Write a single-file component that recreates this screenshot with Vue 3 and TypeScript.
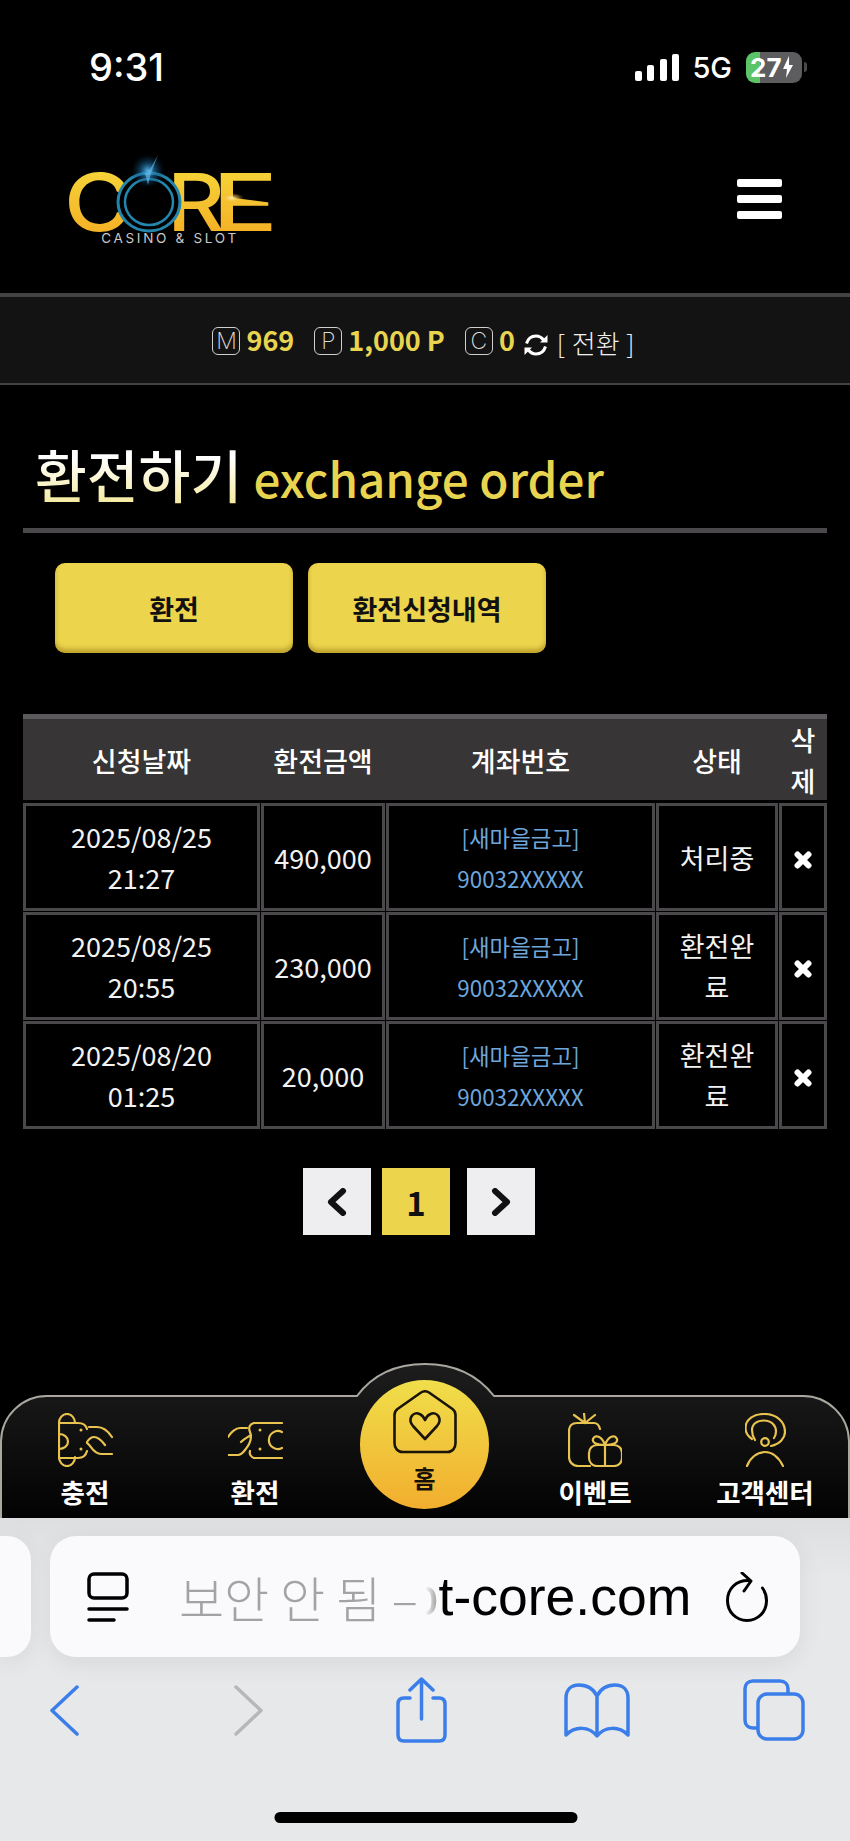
<script setup lang="ts">
const rows = [
  { date: '2025/08/25', time: '21:27', amount: '490,000', status: '처리중' },
  { date: '2025/08/25', time: '20:55', amount: '230,000', status: '환전완료' },
  { date: '2025/08/20', time: '01:25', amount: '20,000', status: '환전완료' }
]

const balances = [
  { key: 'M', value: '969' },
  { key: 'P', value: '1,000 P' },
  { key: 'C', value: '0' }
]

const heads = ['신청날짜', '환전금액', '계좌번호', '상태', '삭제']
</script>

<template>
  <div class="page">
    <div class="status">
      <span class="clock">9:31</span>
      <div class="status-right">
        <svg width="44" height="27" viewBox="0 0 44 27" fill="#fff">
          <rect x="0" y="17" width="7" height="10" rx="2" />
          <rect x="12" y="11" width="7" height="16" rx="2" />
          <rect x="25" y="5" width="7" height="22" rx="2" />
          <rect x="37" y="0" width="7" height="27" rx="2" />
        </svg>
        <span class="net">5G</span>
        <div class="battery"><span>27</span>
          <svg width="10" height="22" viewBox="0 0 10 22" fill="#fff"><path d="M6 0 0 13h4l-1 9 7-13H6z" /></svg>
        </div>
        <i class="nub"></i>
      </div>
    </div>

    <header class="header">
      <svg class="logo" width="216" height="96" viewBox="0 0 216 96">
        <defs>
          <linearGradient id="gold" x1="0" y1="0" x2="0" y2="1">
            <stop offset="0" stop-color="#f6dc3e" />
            <stop offset="1" stop-color="#f4a820" />
          </linearGradient>
          <radialGradient id="glow">
            <stop offset="0" stop-color="#57b8ee" />
            <stop offset="0.45" stop-color="#1c6fa6" stop-opacity="0.55" />
            <stop offset="1" stop-color="#0a2a44" stop-opacity="0" />
          </radialGradient>
          <radialGradient id="flare">
            <stop offset="0" stop-color="#fff3b0" />
            <stop offset="1" stop-color="#f4a820" stop-opacity="0" />
          </radialGradient>
        </defs>
        <text class="logo-letter" x="4" y="80" textLength="68" lengthAdjust="spacingAndGlyphs" fill="url(#gold)">C</text>
        <text class="logo-letter" x="107" y="80" textLength="58" lengthAdjust="spacingAndGlyphs" fill="url(#gold)">R</text>
        <text class="logo-letter" x="152" y="80" textLength="66" lengthAdjust="spacingAndGlyphs" fill="url(#gold)">E</text>
        <polygon points="174,47 213,42 213,52" fill="#000" />
        <ellipse cx="172" cy="47" rx="12" ry="5" fill="url(#flare)" />
        <ellipse cx="89" cy="51" rx="31" ry="29" fill="#000" stroke="#2386ac" stroke-width="3" />
        <ellipse cx="89" cy="51" rx="24" ry="23" fill="none" stroke="#2386ac" stroke-width="2.500" />
        <circle cx="88" cy="20" r="17" fill="url(#glow)" />
        <path d="M88 22 98 4 91 22 88 34 85 22z" fill="#6fc3f2" opacity="0.6" />
        <text class="logo-tag" x="110" y="92" text-anchor="middle">CASINO &amp; SLOT</text>
      </svg>
      <div class="burger"><i></i><i></i><i></i></div>
    </header>

    <div class="balance">
      <template v-for="b in balances" :key="b.key">
        <span class="coin">{{ b.key }}</span>
        <b class="amount">{{ b.value }}</b>
      </template>
      <svg class="sync" width="24" height="22" viewBox="0 0 24 22" fill="none" stroke="#fff" stroke-width="3">
        <path d="M2.500 9.500C4 4.500 8 2 12 2c3.300 0 5.700 1.500 7.500 4" />
        <path d="M21.500 12.500C20 17.500 16 20 12 20c-3.300 0-5.700-1.500-7.500-4" />
        <path d="M23.500 1v7.500H16z" fill="#fff" stroke="none" />
        <path d="M.5 21v-7.500H8z" fill="#fff" stroke="none" />
      </svg>
      <span class="swap">[ 전환 ]</span>
    </div>

    <main class="content">
      <h1 class="title"><span class="title-ko">환전하기</span> <span class="title-en">exchange order</span></h1>

      <div class="tabs">
        <button class="tab">환전</button>
        <button class="tab">환전신청내역</button>
      </div>

      <div class="table">
        <div class="thead">
          <div v-for="h in heads" :key="h" class="th">{{ h }}</div>
        </div>
        <div v-for="(r, i) in rows" :key="i" class="tr">
          <div class="td">{{ r.date }}<br />{{ r.time }}</div>
          <div class="td">{{ r.amount }}</div>
          <div class="td bank">[새마을금고]<br />90032XXXXX</div>
          <div class="td state">{{ r.status }}</div>
          <div class="td">
            <svg class="del" width="18" height="18" viewBox="0 0 18 18" stroke="#fff" stroke-width="6" stroke-linecap="round">
              <path d="M3.500 3.500l11 11M14.500 3.500l-11 11" />
            </svg>
          </div>
        </div>
      </div>

      <div class="pager">
        <button class="pg">
          <svg width="20" height="28" viewBox="0 0 20 28" fill="none" stroke="#111" stroke-width="6" stroke-linecap="round" stroke-linejoin="round"><path d="M16 3 4 14l12 11" /></svg>
        </button>
        <button class="pg on">1</button>
        <button class="pg">
          <svg width="20" height="28" viewBox="0 0 20 28" fill="none" stroke="#111" stroke-width="6" stroke-linecap="round" stroke-linejoin="round"><path d="M4 3l12 11L4 25" /></svg>
        </button>
      </div>
    </main>

    <nav class="nav">
      <svg class="nav-bg" width="850" height="155" viewBox="0 0 850 155">
        <defs>
          <linearGradient id="navfill" x1="0" y1="0" x2="0" y2="1">
            <stop offset="0" stop-color="#1d1d1d" />
            <stop offset="1" stop-color="#020202" />
          </linearGradient>
        </defs>
        <path d="M1 156V78A46 46 0 0 1 47 33H357C374 10 398 1 425 1s51 9 69 32H803A46 46 0 0 1 849 78V156Z" fill="url(#navfill)" stroke="#a9a79f" stroke-width="2" />
      </svg>

      <a class="nav-item">
        <svg width="55" height="54" viewBox="0 0 55 54" fill="none" stroke="#e9c34f" stroke-width="2.200" stroke-linecap="round">
          <path d="M1 44V10a8 9 0 0 1 16 0M1 44a8 9 0 0 0 16 0" />
          <path d="M1 10H20c5 0 8 2 9 6M1 45H20c5 0 8-3 9-7" />
          <path d="M1 21c5 0 9 3 9 7.500S6 36 1 36" />
          <path d="M31 14h8c6 0 11 4 15 10M29 29c2-3 5-5 7-5 4 0 8 4 11 8M29 30c4 2 6 11 14 11h11" />
          <circle cx="23" cy="17" r="1.500" fill="#e9c34f" stroke="none" />
          <circle cx="23" cy="36" r="1.500" fill="#e9c34f" stroke="none" />
        </svg>
        <span>충전</span>
      </a>
      <a class="nav-item">
        <svg width="55" height="54" viewBox="0 0 55 36" fill="none" stroke="#e9c34f" stroke-width="2.200" stroke-linecap="round">
          <path d="M26 1h28M26 36h28M54 10a9 9 0 1 0 0 16" />
          <path d="M0 15C3 10 8 6 12 6H19M26 1C22 2 20 5 22 10 24 15 22 22 17 28 14 32 12 33 10 33H0M13 20C16 17 20 15 23 13M26 36C23 35 21 32 22 29" />
          <circle cx="32" cy="8" r="1.500" fill="#e9c34f" stroke="none" />
          <circle cx="32" cy="27" r="1.500" fill="#e9c34f" stroke="none" />
        </svg>
        <span>환전</span>
      </a>
      <div class="home-cell">
        <a class="home">
          <svg width="64" height="64" viewBox="0 0 64 64" fill="none" stroke="#1a1508" stroke-width="2.600" stroke-linejoin="round">
            <path d="M28 2.500 4.500 19C2.500 20.500 1.500 22 1.500 25v28c0 5 3 9 8 9h45c5 0 8-4 8-9V25c0-3-1-4.500-3-6L36 2.500c-2.500-1.500-5.500-1.500-8 0Z" />
            <path d="M32 49 20 36c-6-7 0-15 6.500-12 3 1.200 4.500 3.500 5.500 6 1-2.500 2.500-4.800 5.500-6C44 21 50 29 44 36Z" />
          </svg>
          <span>홈</span>
        </a>
      </div>
      <a class="nav-item">
        <svg width="54" height="54" viewBox="0 0 54 54" fill="none" stroke="#e9c34f" stroke-width="2.200" stroke-linecap="round">
          <path d="M6 2l11 8M16 0l1 10M27 2 17 10M32 16c-1-4-3-6-6-6H9c-5 0-8 3-8 8v26c0 5 4 9 9 9h12" />
          <rect x="21" y="32" width="33" height="21" rx="8" />
          <path d="M37 32v21M37 32c-3-9-10-11-12-6-1 4 4 6 12 6ZM37 32c3-9 10-11 12-6 1 4-4 6-12 6Z" />
        </svg>
        <span>이벤트</span>
      </a>
      <a class="nav-item">
        <svg width="41" height="54" viewBox="0 0 41 54" fill="none" stroke="#e9c34f" stroke-width="2.200" stroke-linecap="round">
          <path d="M7 26C2.500 23 .5 19 .5 15 .5 6 9 1 19 1c13 0 21 8 21 18 0 6-5 12-14 14" />
          <path d="M10 27C8 24 7 20 7 17 7 11 12 7.500 19 7.500c7.500 0 12 5 12 11 0 2.500-1 5-2 6.500" />
          <circle cx="20" cy="29" r="3.800" />
          <path d="M2 53c3-8 10-14 18-14s14 6 18 14" />
        </svg>
        <span>고객센터</span>
      </a>
    </nav>

    <div class="safari">
      <div class="address-row">
        <div class="stub"></div>
        <div class="address">
          <svg class="reader" width="42" height="50" viewBox="0 0 42 50" fill="none" stroke="#000" stroke-width="3.500" stroke-linecap="round">
            <rect x="2" y="2" width="38" height="24" rx="5" />
            <path d="M2 37h38M2 48h25" />
          </svg>
          <span class="secure">보안 안 됨 –</span><span class="fade">o</span><span class="host">t-core.com</span>
          <svg class="reload" width="42" height="50" viewBox="0 0 42 50" fill="none" stroke="#000" stroke-width="3" stroke-linecap="round" stroke-linejoin="round">
            <path d="M23 8.500C10 8 1.500 17 1.500 28.500 1.500 40 10 48.500 21 48.500S40.500 40 40.500 28.500c0-5-1.500-9-4-12.500" />
            <path d="M16 1l9 8-7 10" />
          </svg>
        </div>
      </div>

      <div class="toolbar">
        <svg class="back" width="29" height="51" viewBox="0 0 29 51" fill="none" stroke="#3b7de9" stroke-width="3.500" stroke-linecap="round" stroke-linejoin="round"><path d="M27 2 2 25.500 27 49" /></svg>
        <svg class="forward" width="29" height="51" viewBox="0 0 29 51" fill="none" stroke="#b6b7b9" stroke-width="3.500" stroke-linecap="round" stroke-linejoin="round"><path d="M2 2l25 23.500L2 49" /></svg>
        <svg class="share" width="51" height="66" viewBox="0 0 51 66" fill="none" stroke="#3b7de9" stroke-width="3.500" stroke-linecap="round" stroke-linejoin="round">
          <path d="M14 21H8c-4 0-6 2-6 6v31c0 4 2 6 6 6h35c4 0 6-2 6-6V27c0-4-2-6-6-6h-6" />
          <path d="M25.500 42V2M14 13 25.500 2 37 13" />
        </svg>
        <svg class="book" width="66" height="55" viewBox="0 0 66 55" fill="none" stroke="#3b7de9" stroke-width="3.500" stroke-linecap="round" stroke-linejoin="round">
          <path d="M33 13C29 5 22 2 15 2 7 2 2 7 2 15v37c9-9 23-9 31 1 8-10 22-10 31-1V15c0-8-5-13-13-13-7 0-14 3-18 11Zv38" />
        </svg>
        <svg class="pages" width="62" height="62" viewBox="0 0 62 62" fill="none" stroke="#3b7de9" stroke-width="3.500" stroke-linejoin="round">
          <path d="M15 49H10c-5 0-8-3-8-8V10c0-5 3-8 8-8h27c5 0 8 3 8 8v4" />
          <rect x="15" y="15" width="45" height="45" rx="9" />
        </svg>
      </div>

      <div class="home-bar"></div>
    </div>
  </div>
</template>

<style scoped>
.page {
  width: 850px;
  height: 1841px;
  display: flex;
  flex-direction: column;
  overflow: hidden;
  background: #000;
  color: #fff;
  font-family: 'Noto Sans CJK KR', 'Noto Sans', sans-serif;
}

.status {
  height: 134px;
  flex: none;
  display: flex;
  align-items: center;
  justify-content: space-between;
  padding: 0 43px 0 89px;
  box-sizing: border-box;
}

.clock {
  font-family: 'Inter', 'Liberation Sans', sans-serif;
  font-size: 38px;
  font-weight: 500;
}

.status-right {
  display: flex;
  align-items: center;
}

.net {
  font-family: 'Inter', 'Liberation Sans', sans-serif;
  font-size: 29px;
  font-weight: 500;
  margin: 0 14px 0 13px;
}

.battery {
  width: 56px;
  height: 31px;
  border-radius: 9px;
  box-sizing: border-box;
  padding-left: 4px;
  display: flex;
  align-items: center;
  gap: 1px;
  background: linear-gradient(to right, #5ac467 14px, #5d5d5f 14px);
  font-family: 'Inter', 'Liberation Sans', sans-serif;
  font-weight: 700;
  font-size: 26px;
}

.nub {
  width: 3px;
  height: 10px;
  margin-left: 2px;
  border-radius: 0 3px 3px 0;
  background: #4a4a4c;
}

.header {
  height: 159px;
  flex: none;
  box-sizing: border-box;
  padding: 0 68px 29px 60px;
  display: flex;
  align-items: center;
  justify-content: space-between;
}

.logo-letter {
  font-family: 'Inter', sans-serif;
  font-size: 80px;
  font-weight: 500;
}

.logo-tag {
  font-family: 'Inter', sans-serif;
  font-size: 13.500px;
  letter-spacing: 2.700px;
  fill: #c9c9c9;
}

.burger {
  display: flex;
  flex-direction: column;
  gap: 8px;
}

.burger i {
  display: block;
  width: 45px;
  height: 8px;
  border-radius: 2px;
  background: #fff;
}

.balance {
  flex: none;
  height: 92px;
  box-sizing: border-box;
  padding: 4px 3px 0 0;
  border-top: 4px solid #434245;
  border-bottom: 2px solid #434245;
  background: #131313;
  display: flex;
  align-items: center;
  justify-content: center;
}

.coin {
  width: 28px;
  height: 28px;
  box-sizing: border-box;
  border: 1.500px solid #cfcfcf;
  border-radius: 6px;
  display: flex;
  align-items: center;
  justify-content: center;
  font-family: 'Inter', sans-serif;
  font-weight: 200;
  font-size: 23px;
  color: #dcdcdc;
  margin-top: -2px;
}

.amount {
  font-size: 27px;
  color: #e9d44f;
  margin: -6px 20px 0 6px;
}

.amount:nth-of-type(3) {
  margin-right: 9px;
}

.sync {
  margin-top: 6px;
  margin-right: 9px;
}

.swap {
  font-size: 26px;
  font-weight: 300;
  word-spacing: 1px;
  color: #f0f0f0;
}

.content {
  flex: 1;
  padding: 0 23px;
}

.title {
  margin: 0;
  box-sizing: border-box;
  padding: 51px 0 0 12px;
  border-bottom: 5px solid #4a484b;
  height: 148px;
  font-size: 50px;
  line-height: 76px;
  font-weight: 500;
  white-space: nowrap;
}

.title-ko {
  font-size: 56.300px;
  background: linear-gradient(to bottom, #ffffff 30%, #f3e58a);
  -webkit-background-clip: text;
  background-clip: text;
  color: transparent;
}

.title-en {
  color: #e9d44f;
  font-size: 47.600px;
}

.tabs {
  display: flex;
  gap: 15px;
  padding: 30px 0 0 32px;
}

.tab {
  width: 238px;
  height: 90px;
  border: none;
  border-radius: 10px;
  background: #ecd44c;
  box-shadow: inset 0 -4px 4px rgba(120, 90, 0, 0.4);
  font-family: inherit;
  font-size: 27px;
  font-weight: 700;
  color: #111;
  padding: 0;
}

.table {
  margin-top: 61px;
}

.thead,
.tr {
  display: grid;
  grid-template-columns: 237px 124px 269px 122px 48px;
  column-gap: 1px;
}

.thead {
  height: 81px;
  border-top: 5px solid #5b595c;
  background: #373536;
  margin-bottom: 3px;
}

.th {
  display: flex;
  align-items: center;
  justify-content: center;
  text-align: center;
  font-size: 27px;
  line-height: 41px;
  font-weight: 500;
  padding: 0 10px;
}

.tr {
  margin-bottom: 1px;
}

.td {
  height: 108px;
  box-sizing: border-box;
  border: 3px solid #4a484b;
  display: flex;
  align-items: center;
  justify-content: center;
  text-align: center;
  font-size: 27px;
  line-height: 41px;
  color: #f2f2f2;
  word-break: break-all;
}

.bank {
  display: block;
  padding-top: 11px;
  font-size: 22.400px;
  color: #6ea6dc;
}

.state {
  padding: 0 10px;
}

.del {
  margin-top: 6px;
}

.pager {
  display: flex;
  justify-content: center;
  gap: 11px;
  margin-top: 39px;
  padding-right: 12px;
}

.pg {
  width: 68px;
  height: 67px;
  border: none;
  padding: 0;
  background: #eeedf0;
  display: flex;
  align-items: center;
  justify-content: center;
  font-family: inherit;
  font-size: 33px;
  font-weight: 700;
  color: #111;
}

.pg.on {
  background: #ecd44c;
  margin-right: 6px;
}

.nav {
  position: relative;
  flex: none;
  height: 155px;
  box-sizing: border-box;
  padding-top: 50px;
  display: grid;
  grid-template-columns: repeat(5, 1fr);
  border-bottom: 1px solid #9c9c9c;
}

.nav-bg {
  position: absolute;
  left: 0;
  top: 0;
}

.nav-item {
  position: relative;
  display: flex;
  flex-direction: column;
  align-items: center;
  font-size: 26.500px;
  line-height: 36px;
  font-weight: 700;
  color: #fff;
}

.nav-item span {
  margin-top: 7px;
}

.home {
  position: absolute;
  left: 360px;
  top: 17px;
  width: 129px;
  height: 129px;
  padding-top: 10px;
  box-sizing: border-box;
  border-radius: 50%;
  display: flex;
  flex-direction: column;
  align-items: center;
  background: linear-gradient(to bottom, #f0de4a, #f2ae2e);
  color: #15110a;
  font-size: 24px;
  line-height: 32px;
  font-weight: 700;
}

.home span {
  margin-top: 8px;
}

.safari {
  flex: none;
  height: 323px;
  background: linear-gradient(to bottom, #dddedf, #e6e8ea 60px);
}

.address-row {
  display: flex;
  gap: 19px;
  padding-top: 18px;
}

.stub {
  width: 31px;
  height: 121px;
  background: #fafafc;
  border-radius: 0 24px 24px 0;
  box-shadow: 0 6px 24px rgba(0, 0, 0, 0.07);
}

.address {
  width: 750px;
  height: 121px;
  box-sizing: border-box;
  padding: 0 32px 0 37px;
  display: flex;
  align-items: center;
  border-radius: 26px;
  background: #fafafc;
  box-shadow: 0 6px 24px rgba(0, 0, 0, 0.07);
  font-family: 'Liberation Sans', 'Noto Sans CJK KR', sans-serif;
  font-size: 53.500px;
  white-space: nowrap;
}

.reader {
  margin-right: 50px;
}

.secure {
  color: #a3a3a4;
  font-family: 'Noto Sans CJK KR', sans-serif;
  font-weight: 300;
  font-size: 49px;
}

.fade {
  margin-left: -9px;
  background: linear-gradient(to right, transparent 55%, #8f8f8f);
  -webkit-background-clip: text;
  background-clip: text;
  color: transparent;
}

.host {
  color: #000;
  margin-right: auto;
}

.toolbar {
  display: flex;
  align-items: center;
  height: 66px;
  margin-top: 20px;
  padding-left: 50px;
}

.forward { margin-left: 155px; }
.share { margin-left: 133px; }
.book { margin-left: 117px; }
.pages { margin-left: 113px; }

.home-bar {
  width: 303px;
  height: 11px;
  margin: 69px auto 0;
  transform: translateX(0.500px);
  border-radius: 6px;
  background: #000;
}
</style>

<style>
html,
body {
  margin: 0;
  background: #000;
}
</style>
